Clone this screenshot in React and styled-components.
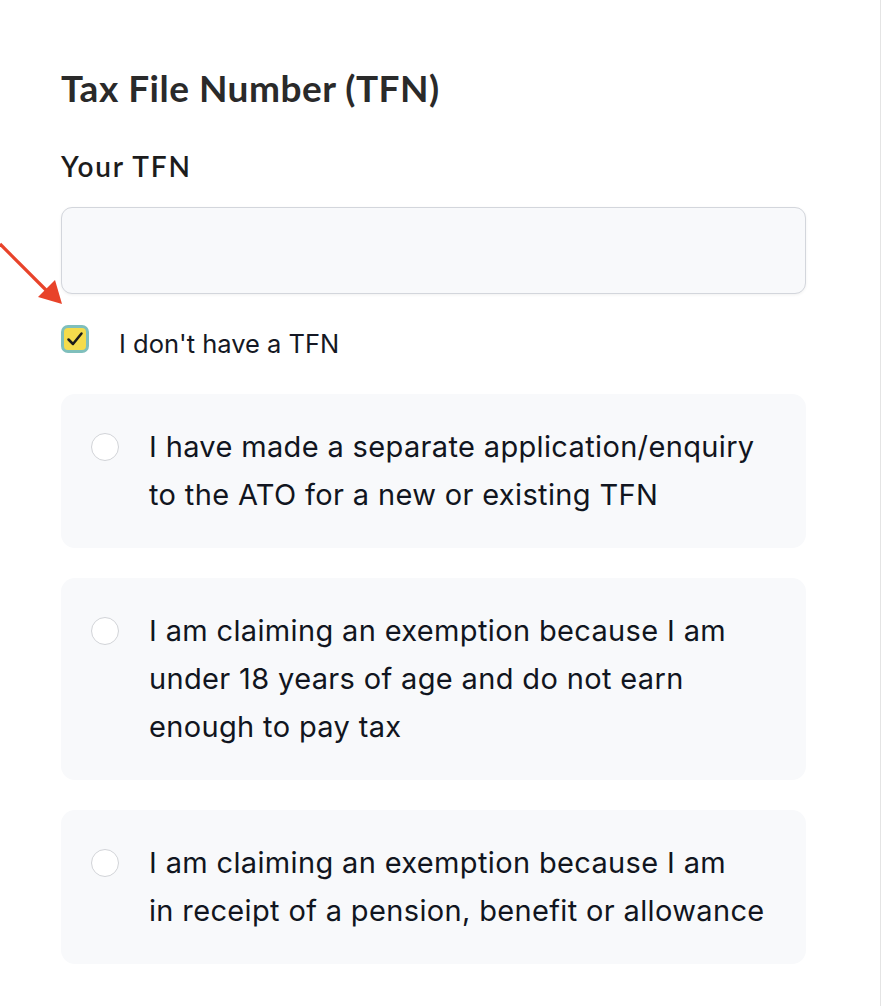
import React from 'react';
import styled, { createGlobalStyle } from 'styled-components';

const GlobalStyle = createGlobalStyle`
  html, body {
    margin: 0;
    padding: 0;
    background: #ffffff;
  }
`;

const Panel = styled.div`
  position: relative;
  box-sizing: border-box;
  width: 881px;
  min-height: 1006px;
  padding: 66px 75px 40px 61px;
  border-right: 1px solid #e4e4e4;
  background: #ffffff;
`;

const Title = styled.h2`
  margin: 0;
  font-family: Lato, "Noto Sans", sans-serif;
  font-weight: 700;
  font-size: 37px;
  line-height: 44px;
  color: #2a2a2a;
  letter-spacing: 0.5px;
`;

const FieldLabel = styled.label`
  display: block;
  margin-top: 38px;
  font-family: Lato, "Noto Sans", sans-serif;
  font-weight: 600;
  font-size: 28px;
  line-height: 36px;
  color: #1c1c1c;
  letter-spacing: 1.8px;
`;

const TextInput = styled.input`
  display: block;
  box-sizing: border-box;
  width: 745px;
  height: 87px;
  margin-top: 23px;
  border: 1.5px solid #d3d6dc;
  border-radius: 11px;
  background: #f8f9fb;
  box-shadow: 0 1px 3px rgba(0, 0, 0, 0.06);
  outline: none;
`;

const CheckRow = styled.label`
  display: flex;
  align-items: flex-start;
  gap: 30px;
  margin-top: 31px;
  font-family: Inter, "Liberation Sans", sans-serif;
  font-size: 25.5px;
  line-height: 31px;
  color: #141824;
`;

const CheckLabel = styled.span`
  margin-top: 3px;
`;

const CheckBox = styled.span`
  display: flex;
  align-items: center;
  justify-content: center;
  box-sizing: border-box;
  width: 28px;
  height: 28px;
  border: 3px solid #7fbfbc;
  border-radius: 7px;
  background: #f4dc4c;
`;

const Options = styled.div`
  display: flex;
  flex-direction: column;
  gap: 30px;
  margin-top: 35px;
`;

const Card = styled.div`
  display: flex;
  align-items: flex-start;
  gap: 30px;
  box-sizing: border-box;
  width: 745px;
  padding: 29px 30px 29px 30px;
  border-radius: 14px;
  background: #f8f9fb;
`;

const Radio = styled.span`
  flex: none;
  box-sizing: border-box;
  width: 28px;
  height: 28px;
  margin-top: 10px;
  border: 1.5px solid #d2d4d8;
  border-radius: 50%;
  background: #ffffff;
`;

const OptionText = styled.span`
  flex: 1;
  font-family: Inter, "Liberation Sans", sans-serif;
  font-size: 29px;
  line-height: 48px;
  letter-spacing: 0.35px;
  color: #111520;
  white-space: nowrap;
`;

const Arrow = styled.svg`
  position: absolute;
  left: 0;
  top: 240px;
`;

const options = [
  ['I have made a separate application/enquiry', 'to the ATO for a new or existing TFN'],
  ['I am claiming an exemption because I am', 'under 18 years of age and do not earn', 'enough to pay tax'],
  ['I am claiming an exemption because I am', 'in receipt of a pension, benefit or allowance'],
];

export default function App() {
  return (
    <>
      <GlobalStyle />
      <Panel>
        <Title>Tax File Number (TFN)</Title>
        <FieldLabel>Your TFN</FieldLabel>
        <TextInput type="text" />
        <CheckRow>
          <CheckBox>
            <svg width="20" height="20" viewBox="0 0 20 20">
              <polyline points="3.5,10.5 8,15 16.5,4.5" fill="none" stroke="#1b1b1b" strokeWidth="2.5" strokeLinecap="round" strokeLinejoin="round" />
            </svg>
          </CheckBox>
          <CheckLabel>I don't have a TFN</CheckLabel>
        </CheckRow>
        <Options>
          {options.map((lines) => (
            <Card key={lines.join(' ')}>
              <Radio />
              <OptionText>
                {lines.map((line, i) => (
                  <React.Fragment key={line}>
                    {i > 0 && <br />}
                    {line}
                  </React.Fragment>
                ))}
              </OptionText>
            </Card>
          ))}
        </Options>
        <Arrow width="70" height="70" viewBox="0 0 70 70">
          <line x1="0" y1="4" x2="48" y2="52" stroke="#e8432a" strokeWidth="3.2" />
          <polygon points="62,64 38,57 55,40" fill="#e8432a" />
        </Arrow>
      </Panel>
    </>
  );
}
